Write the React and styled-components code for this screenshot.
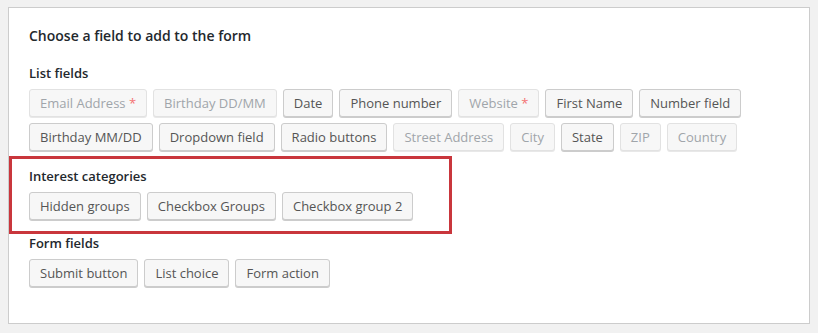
import React from 'react'
import styled, { createGlobalStyle } from 'styled-components'

const GlobalStyle = createGlobalStyle`
  body {
    margin: 0;
    background: #f1f1f1;
    font-family: "Open Sans", "Liberation Sans", sans-serif;
  }
`

const listFields = [
  { text: 'Email Address', required: true, disabled: true },
  { text: 'Birthday DD/MM', disabled: true },
  { text: 'Date' },
  { text: 'Phone number' },
  { text: 'Website', required: true, disabled: true },
  { text: 'First Name' },
  { text: 'Number field' },
  { text: 'Birthday MM/DD' },
  { text: 'Dropdown field' },
  { text: 'Radio buttons' },
  { text: 'Street Address', disabled: true },
  { text: 'City', disabled: true },
  { text: 'State' },
  { text: 'ZIP', disabled: true },
  { text: 'Country', disabled: true },
]

const interestFields = [
  { text: 'Hidden groups' },
  { text: 'Checkbox Groups' },
  { text: 'Checkbox group 2' },
]

const formFields = [
  { text: 'Submit button' },
  { text: 'List choice' },
  { text: 'Form action' },
]

function FieldButtons({ items }) {
  return (
    <ButtonWrap>
      {items.map(item => (
        <FieldButton key={item.text} $disabled={item.disabled}>
          {item.text}
          {item.required && <Required> *</Required>}
        </FieldButton>
      ))}
    </ButtonWrap>
  )
}

function App() {
  return (
    <Page>
      <GlobalStyle />
      <Panel>
        <Title>Choose a field to add to the form</Title>
        <Section>
          <Label>List fields</Label>
          <FieldButtons items={listFields} />
        </Section>
        <Highlight>
          <Label>Interest categories</Label>
          <FieldButtons items={interestFields} />
        </Highlight>
        <Section>
          <Label>Form fields</Label>
          <FieldButtons items={formFields} />
        </Section>
      </Panel>
    </Page>
  )
}

export default App

const Page = styled.div`
  padding: 7px 8px 10px 8px;
`

const Panel = styled.div`
  box-sizing: border-box;
  width: 802px;
  background: #fff;
  border: 1px solid #ccc;
  padding: 18px 20px 36px 20px;
  display: flex;
  flex-direction: column;
  align-items: flex-start;
`

const Title = styled.div`
  font-size: 14px;
  line-height: 20px;
  font-weight: 600;
  color: #23282d;
  margin-bottom: 18px;
`

const Section = styled.div`
  display: flex;
  flex-direction: column;
`

const Highlight = styled(Section)`
  margin: 5px 0 0 -20px;
  padding: 8px 36px 11px 17px;
  border: 3px solid #c9363c;
`

const Label = styled.div`
  font-size: 13px;
  line-height: 18px;
  font-weight: 600;
  color: #23282d;
  margin-bottom: 7px;
`

const ButtonWrap = styled.div`
  display: flex;
  flex-wrap: wrap;
  gap: 6px 6px;
  max-width: 720px;
`

const FieldButton = styled.div`
  box-sizing: border-box;
  height: 28px;
  line-height: 26px;
  padding: 0 10px;
  font-size: 13px;
  background: #f7f7f7;
  border-radius: 3px;
  white-space: nowrap;
  border: 1px solid ${p => (p.$disabled ? '#e2e2e2' : '#cccccc')};
  box-shadow: 0 1px 0 ${p => (p.$disabled ? '#e8e8e8' : '#cccccc')};
  color: ${p => (p.$disabled ? '#a0a5aa' : '#555555')};
`

const Required = styled.span`
  color: #f47373;
`
